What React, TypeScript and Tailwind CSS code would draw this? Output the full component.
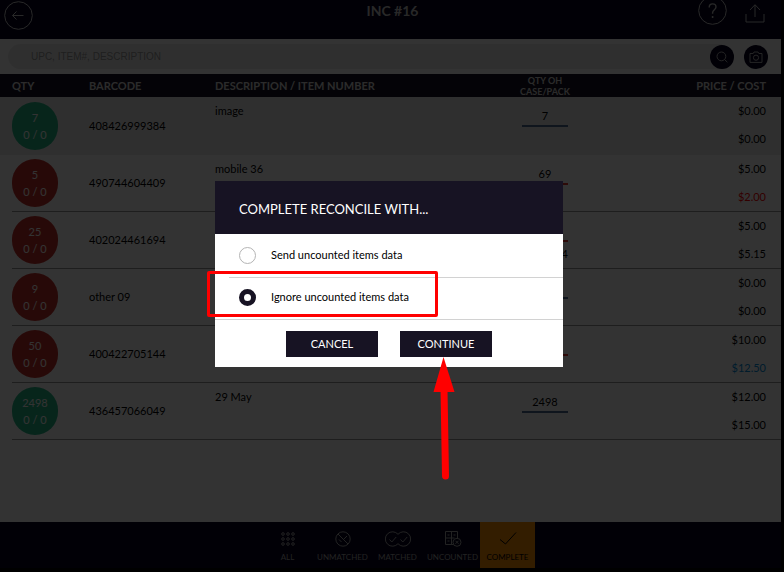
import { useState } from "react";

interface Item {
  qty: string;
  barcode: string;
  description: string;
  onHand: string;
  pack?: string;
  line: string;
  price: string;
  cost: string;
  costColor?: string;
  matched?: boolean;
}

const items: Item[] = [
  { qty: "7", barcode: "408426999384", description: "image", onHand: "7", line: "border-[#4a6c90]", price: "$0.00", cost: "$0.00", matched: true },
  { qty: "5", barcode: "490744604409", description: "mobile 36", onHand: "69", line: "border-[#e0352b]", price: "$5.00", cost: "$2.00", costColor: "text-[#ff0000]" },
  { qty: "25", barcode: "402024461694", description: "", onHand: "25", pack: "4", line: "border-[#e0352b]", price: "$5.00", cost: "$5.15" },
  { qty: "9", barcode: "other 09", description: "", onHand: "9", line: "border-[#4a6c90]", price: "$0.00", cost: "$0.00" },
  { qty: "50", barcode: "400422705144", description: "", onHand: "50", line: "border-[#e0352b]", price: "$10.00", cost: "$12.50", costColor: "text-[#008cdc]" },
  { qty: "2498", barcode: "436457066049", description: "29 May", onHand: "2498", line: "border-[#4a6c90]", price: "$12.00", cost: "$15.00", matched: true },
];

function Header() {
  return (
    <header className="grid grid-cols-3 items-start h-[39px] bg-[#05001e] text-[#c8c8c8] overflow-hidden">
      <button aria-label="Back" className="ml-1 mt-px w-[29px] h-[29px]">
        <svg width="29" height="29" viewBox="0 0 29 29" fill="none" stroke="currentColor">
          <circle cx="14.5" cy="14.5" r="13.8" />
          <path d="M19.5 14.5H8.5M12.5 10.5l-4 4 4 4" />
        </svg>
      </button>
      <h1 className="pl-1 text-center text-[14px] leading-[21px] font-bold">INC #16</h1>
      <div className="flex justify-end gap-[18px] pr-4">
        <button aria-label="Help" className="-mt-1 w-[29px] h-[29px]">
          <svg width="29" height="29" viewBox="0 0 29 29" fill="none" stroke="currentColor">
            <circle cx="14.5" cy="14.5" r="13.8" />
            <path d="M11.2 11.4c0-2.2 1.5-3.5 3.4-3.5s3.4 1.2 3.4 3.1c0 2.6-3.4 2.8-3.4 5.8v1" strokeWidth="1.4" />
            <path d="M14.6 20v2" strokeWidth="1.6" />
          </svg>
        </button>
        <button aria-label="Share" className="mt-[3px] w-5 h-5">
          <svg width="20" height="20" viewBox="0 0 20 20" fill="none" stroke="currentColor">
            <path d="M1 11v8h18v-8" />
            <path d="M10 14V2M5 7l5-5.3L15 7" />
          </svg>
        </button>
      </div>
    </header>
  );
}

function SearchBar() {
  return (
    <div className="flex items-center h-[35px] pl-2 pr-[13px] bg-white">
      <input
        aria-label="Search items"
        placeholder="UPC, ITEM#, DESCRIPTION"
        className="flex-1 min-w-0 h-[25px] pl-[23px] rounded-l-full bg-[#ebebeb] text-[10px] placeholder:text-[#9b9b9b] font-['Liberation_Sans',sans-serif]"
      />
      <button aria-label="Search" className="-ml-3 mr-[10px] w-6 h-6 rounded-full bg-[#05001e] text-[#b4b4b4] flex items-center justify-center">
        <svg width="12" height="12" viewBox="0 0 12 12" fill="none" stroke="currentColor">
          <circle cx="5.4" cy="5.4" r="4.4" />
          <path d="m8.6 8.6 2.8 2.6" />
        </svg>
      </button>
      <button aria-label="Scan" className="w-6 h-6 rounded-full bg-[#05001e] text-[#b4b4b4] flex items-center justify-center">
        <svg width="14" height="12" viewBox="0 0 14 12" fill="none" stroke="currentColor">
          <path d="M1 2.5h3.2L5 1h4l.8 1.5H13v8.9H1z" />
          <circle cx="7" cy="6.7" r="2.6" />
        </svg>
      </button>
    </div>
  );
}

function ItemRow({ item, active }: { item: Item; active: boolean }) {
  const cell = active ? "h-[58px] p-0" : "h-[57px] p-0 border-b border-[#969696]";
  return (
    <tr className={active ? "bg-[#ebebeb]" : "bg-white"}>
      <td className="p-0 pl-3">
        <div className={`flex items-center ${active ? "h-[58px]" : "h-[57px] border-b border-[#969696]"}`}>
          <div className={`flex flex-col items-center justify-center w-[46px] h-12 rounded-full text-[11px] leading-[17px] text-white ${item.matched ? "bg-[#26b888]" : "bg-[#c4302a]"}`}>
            <span>{item.qty}</span>
            <span>0 / 0</span>
          </div>
        </div>
      </td>
      <td className={cell}>{item.barcode}</td>
      <td className={`${cell} align-top`}>
        <div className="leading-7">{item.description}</div>
      </td>
      <td className={`${cell} align-top`}>
        <div className="w-[46px] mx-auto pt-[10px]">
          <input
            aria-label={`Quantity on hand ${item.barcode}`}
            defaultValue={item.onHand}
            className={`block w-full h-5 pb-0.5 border-b-2 text-center leading-4 ${item.line}`}
          />
          {item.pack && <div className="text-right leading-6">{item.pack}</div>}
        </div>
      </td>
      <td className={`${cell} align-top`}>
        <div className="flex flex-col pr-[15px] text-right leading-7">
          <span>{item.price}</span>
          <span className={item.costColor}>{item.cost}</span>
        </div>
      </td>
    </tr>
  );
}

function ItemTable() {
  return (
    <table className="w-full table-fixed border-separate border-spacing-0 text-[11px] text-black">
      <thead>
        <tr className="bg-[#171323] text-[#d7d7d7] text-left">
          <th className="w-[89px] h-[23px] p-0 pt-0.5 pl-3">QTY</th>
          <th className="w-[126px] p-0 pt-0.5">BARCODE</th>
          <th className="p-0 pt-0.5">DESCRIPTION / ITEM NUMBER</th>
          <th className="w-[100px] p-0 pt-px text-center text-[9px] leading-[11px]">QTY OH<br />CASE/PACK</th>
          <th className="w-[186px] p-0 pt-0.5 pr-[15px] text-right">PRICE / COST</th>
        </tr>
      </thead>
      <tbody>
        {items.map((item, i) => (
          <ItemRow key={item.barcode} item={item} active={i === 0} />
        ))}
      </tbody>
    </table>
  );
}

const tab = "flex flex-col items-center w-[55px] h-[46px] pt-2 text-[8px]";

function BottomNav() {
  return (
    <nav className="flex justify-center pl-[14px] bg-[#05001e] text-[#aaaaaa]">
      <button className={tab}>
        <svg width="18" height="18" viewBox="0 0 18 18" fill="none" stroke="currentColor">
          {[4, 9, 14].map((y) => [4, 9, 14].map((x) => <circle key={`${x}-${y}`} cx={x} cy={y} r="1.3" />))}
        </svg>
        <span className="mt-[3px]">ALL</span>
      </button>
      <button className={tab}>
        <svg width="18" height="18" viewBox="0 0 18 18" fill="none" stroke="currentColor">
          <circle cx="9" cy="9" r="7.2" />
          <path d="M4 4l10 10M5 9.5l2.5 2.5M9.5 9.5l3.5-3.5" />
        </svg>
        <span className="mt-[3px]">UNMATCHED</span>
      </button>
      <button className={tab}>
        <svg width="26" height="18" viewBox="0 0 26 18" fill="none" stroke="currentColor">
          <path d="M13 4.3A7.2 7.2 0 1 0 13 13.7A7.2 7.2 0 1 0 13 4.3" />
          <path d="m4.5 9.5 2.3 2.5 4.4-5M15.5 9.5l2.3 2.5 4.4-5" />
        </svg>
        <span className="mt-[3px]">MATCHED</span>
      </button>
      <button className={tab}>
        <svg width="18" height="18" viewBox="0 0 18 18" fill="none" stroke="currentColor">
          <path d="M9.5 14.5h-8v-13h12v7M1.5 8h9M7.5 1.5v13" />
          <path d="M3.5 5h2M9.5 5h2M3.5 11h2" />
          <circle cx="13" cy="12.3" r="4" />
          <path d="m11.5 10.8 3 3m0-3-3 3" />
        </svg>
        <span className="mt-[3px]">UNCOUNTED</span>
      </button>
      <button className={`${tab} bg-[#ff9100] text-black`}>
        <svg width="18" height="18" viewBox="0 0 18 18" fill="none" stroke="currentColor">
          <path d="m1 9.5 5.5 4.5L17 2.5" />
        </svg>
        <span className="mt-[3px]">COMPLETE</span>
      </button>
    </nav>
  );
}

const radio = "appearance-none w-[17px] h-[17px] rounded-full border border-[#b4b4b4] bg-white checked:border-[5px] checked:border-[#171323]";
const action = "w-[92px] h-[26px] bg-[#171323] text-white text-[11px]";

function ReconcileDialog() {
  const [choice, setChoice] = useState("ignore");

  return (
    <div role="dialog" aria-labelledby="reconcile-title" className="w-[348px] bg-white text-[11px] text-black">
      <h2 id="reconcile-title" className="pl-6 pt-[3px] bg-[#171323] text-white text-[13px] leading-[50px]">
        COMPLETE RECONCILE WITH...
      </h2>
      <div className="pl-[14px]">
        <label className="flex items-center gap-[15px] h-11 pl-[10px] border-b border-[#d2d2d2]">
          <input type="radio" name="reconcile" className={radio} checked={choice === "send"} onChange={() => setChoice("send")} />
          Send uncounted items data
        </label>
      </div>
      <div className="relative border-b border-[#d2d2d2]">
        <label className="flex items-center gap-[15px] h-[41px] pl-6 pb-0.5">
          <input type="radio" name="reconcile" className={radio} checked={choice === "ignore"} onChange={() => setChoice("ignore")} />
          Ignore uncounted items data
        </label>
        <div className="absolute -left-2 -top-[7px] w-[231px] h-[46px] rounded-xs border-3 border-[#ff0000]" />
      </div>
      <div className="flex justify-center gap-[22px] pt-[11px] pb-[10px]">
        <button className={action}>CANCEL</button>
        <div className="relative">
          <button className={action}>CONTINUE</button>
          <svg className="absolute top-[26px] left-[33px]" width="22" height="123" viewBox="0 0 22 123">
            <path d="M10.5 0 21.5 35H0.5z" fill="#ff0000" />
            <path d="M11 32 12.5 119" stroke="#ff0000" strokeWidth="7" strokeLinecap="round" />
          </svg>
        </div>
      </div>
    </div>
  );
}

export default function App() {
  return (
    <div className="relative min-h-screen flex flex-col pr-[3px] pb-1 bg-black font-[Lato,sans-serif]">
      <Header />
      <SearchBar />
      <main className="flex-1 bg-white">
        <ItemTable />
      </main>
      <BottomNav />
      <div className="absolute inset-0 flex items-center justify-center pr-1.5 pb-6 bg-black/80">
        <ReconcileDialog />
      </div>
    </div>
  );
}
